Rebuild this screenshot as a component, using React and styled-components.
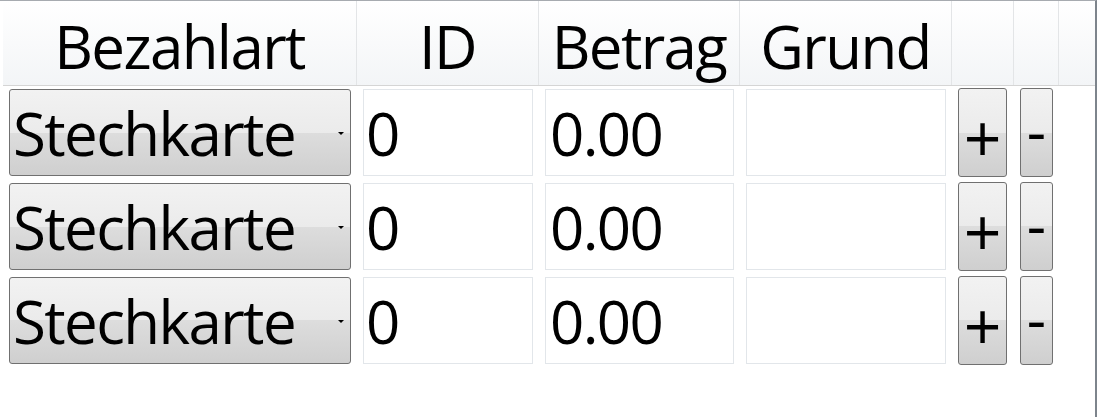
import React from "react";
import styled, { createGlobalStyle } from "styled-components";

const Global = createGlobalStyle`
  html, body { margin: 0; padding: 0; background: #ffffff; }
  body { font-family: "Open Sans", "Noto Sans", sans-serif; }
`;

const COLS = "354px 182px 201px 212px 62px 45px 34px";

const Frame = styled.div`
  width: 1097px;
  height: 417px;
  box-sizing: border-box;
  border-top: 1px solid #a7abb0;
  border-right: 2px solid #7d848c;
  padding-left: 3px;
  background: #ffffff;
  overflow: hidden;
`;

const HeaderRow = styled.div`
  display: grid;
  grid-template-columns: ${COLS};
  height: 85px;
  box-sizing: border-box;
  border-bottom: 1px solid #d5d5d5;
  background: linear-gradient(#ffffff, #f3f5f7);
`;

const HeaderCell = styled.div`
  display: flex;
  align-items: flex-start;
  justify-content: center;
  border-right: 1px solid #e3e5e7;
  padding-top: 15px;
  font-size: 60px;
  letter-spacing: -1.6px;
  line-height: 1;
  color: #000;
  &:last-child { border-right: none; }
`;

const Row = styled.div`
  display: grid;
  grid-template-columns: ${COLS};
  height: 94px;
`;

const Cell = styled.div`
  padding: 3px 6px 0 6px;
  box-sizing: border-box;
`;

const Combo = styled.div`
  position: relative;
  height: 87px;
  box-sizing: border-box;
  border: 1px solid #707070;
  border-radius: 3px;
  background: linear-gradient(#f2f2f2 0%, #ebebeb 50%, #dddddd 50%, #cfcfcf 100%);
  display: flex;
  align-items: center;
  padding-left: 3px;
  font-size: 60px;
  letter-spacing: -1.6px;
  line-height: 1;
  color: #000;
`;

const Arrow = styled.div`
  position: absolute;
  right: 6px;
  top: 42px;
  width: 0;
  height: 0;
  border-left: 3px solid transparent;
  border-right: 3px solid transparent;
  border-top: 3px solid #000;
`;

const TextBox = styled.div`
  height: 87px;
  box-sizing: border-box;
  border: 1px solid #e2e6ea;
  background: #fff;
  display: flex;
  align-items: center;
  padding-left: ${(p) => p.$pad}px;
  font-size: 60px;
  letter-spacing: -1.6px;
  line-height: 1;
  color: #000;
`;

const Btn = styled.div`
  margin-top: -1px;
  width: ${(p) => p.$w}px;
  height: 89px;
  box-sizing: border-box;
  border: 1px solid #707070;
  border-radius: 3px;
  background: linear-gradient(#f2f2f2 0%, #ebebeb 50%, #dddddd 50%, #cfcfcf 100%);
  display: flex;
  align-items: center;
  justify-content: center;
  padding-top: ${(p) => (p.$shift > 0 ? p.$shift : 0)}px;
  padding-bottom: ${(p) => (p.$shift < 0 ? -p.$shift : 0)}px;
  font-size: ${(p) => p.$size}px;
  line-height: 1;
  color: #000;
`;

const rows = [0, 1, 2];

export default function App() {
  return (
    <>
      <Global />
      <Frame>
        <HeaderRow>
          <HeaderCell>Bezahlart</HeaderCell>
          <HeaderCell>ID</HeaderCell>
          <HeaderCell>Betrag</HeaderCell>
          <HeaderCell>Grund</HeaderCell>
          <HeaderCell />
          <HeaderCell />
          <HeaderCell />
        </HeaderRow>
        {rows.map((r) => (
          <Row key={r}>
            <Cell>
              <Combo>
                Stechkarte
                <Arrow />
              </Combo>
            </Cell>
            <Cell>
              <TextBox $pad={2}>0</TextBox>
            </Cell>
            <Cell>
              <TextBox $pad={4}>0.00</TextBox>
            </Cell>
            <Cell>
              <TextBox $pad={4} />
            </Cell>
            <Cell>
              <Btn $w={49} $shift={7} $size={66}>+</Btn>
            </Cell>
            <Cell>
              <Btn $w={33} $shift={-6} $size={60}>-</Btn>
            </Cell>
            <Cell />
          </Row>
        ))}
      </Frame>
    </>
  );
}
